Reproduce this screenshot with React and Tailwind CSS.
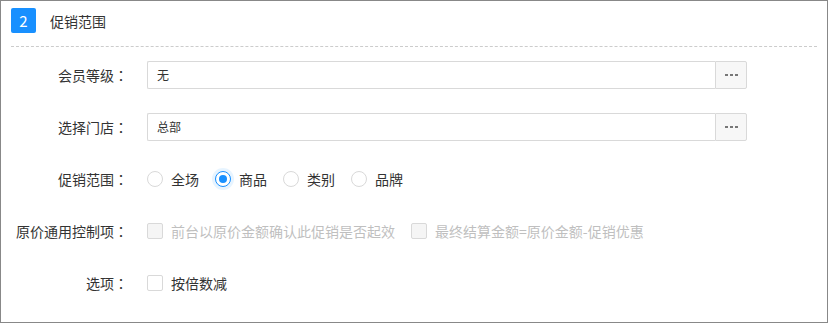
import React from 'react';

const Radio = ({ label, checked }) => (
  <label className="flex items-center gap-[8px]">
    <span
      className={
        checked
          ? 'w-[16px] h-[16px] rounded-full border border-[#1890ff] bg-white flex items-center justify-center shadow-[0_0_0_3px_rgba(24,144,255,0.1)]'
          : 'w-[16px] h-[16px] rounded-full border border-[#d9d9d9] bg-white'
      }
    >
      {checked && <span className="w-[8px] h-[8px] rounded-full bg-[#1890ff]" />}
    </span>
    <span>{label}</span>
  </label>
);

const Checkbox = ({ label, disabled }) => (
  <label className="flex items-center gap-[8px]">
    <span
      className={
        disabled
          ? 'w-[16px] h-[16px] rounded-[2px] border border-[#d9d9d9] bg-[#f5f5f5]'
          : 'w-[16px] h-[16px] rounded-[2px] border border-[#d9d9d9] bg-white'
      }
    />
    <span className={disabled ? 'text-[#bfbfbf]' : ''}>{label}</span>
  </label>
);

const Picker = ({ value }) => (
  <div className="flex w-[600px] h-[28px]">
    <div className="flex-1 flex items-center border border-r-0 border-[#d9d9d9] rounded-l-[2px] px-[9px] text-[12px] text-[#333]">
      {value}
    </div>
    <button className="w-[32px] h-[28px] flex items-center justify-center gap-[2px] border border-[#d9d9d9] bg-[#f7f7f7] rounded-r-[2px]">
      <span className="w-[3px] h-[2px] bg-[#777]" />
      <span className="w-[3px] h-[2px] bg-[#777]" />
      <span className="w-[3px] h-[2px] bg-[#777]" />
    </button>
  </div>
);

const Row = ({ label, children }) => (
  <div className="flex items-center h-[28px] mb-[24px]">
    <div className="w-[127px] text-right">
      {label}
      <span className="font-['Noto_Sans_CJK_JP',sans-serif]">：</span>
    </div>
    <div className="ml-[19px] flex items-center">{children}</div>
  </div>
);

export default function App() {
  return (
    <div className="w-[828px] h-[323px] border border-[#888] bg-white text-[14px] leading-[20px] text-[#333] font-['Noto_Sans_CJK_SC',sans-serif]">
      <div className="flex items-center mx-[10px] pt-[7px] pb-[13px] border-b border-dashed border-[#ccc]">
        <div className="w-[25px] h-[25px] rounded-[2px] bg-[#1890ff] text-white text-[15px] flex items-center justify-center">
          2
        </div>
        <div className="ml-[14px]">促销范围</div>
      </div>

      <div className="pt-[14px]">
        <Row label="会员等级">
          <Picker value="无" />
        </Row>
        <Row label="选择门店">
          <Picker value="总部" />
        </Row>
        <Row label="促销范围">
          <div className="flex items-center gap-[16px]">
            <Radio label="全场" />
            <Radio label="商品" checked />
            <Radio label="类别" />
            <Radio label="品牌" />
          </div>
        </Row>
        <Row label="原价通用控制项">
          <div className="flex items-center gap-[16px]">
            <Checkbox label="前台以原价金额确认此促销是否起效" disabled />
            <Checkbox label="最终结算金额=原价金额-促销优惠" disabled />
          </div>
        </Row>
        <Row label="选项">
          <Checkbox label="按倍数减" />
        </Row>
      </div>
    </div>
  );
}
